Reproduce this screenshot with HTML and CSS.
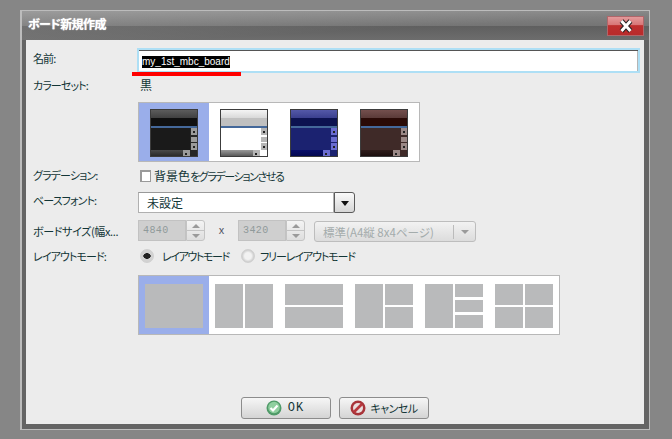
FILE: index.html
```html
<!DOCTYPE html>
<html lang="ja">
<head>
    <meta charset="UTF-8">
    <meta name="viewport" content="width=device-width, initial-scale=1.0">
    <title>ボード新規作成</title>
    <link rel="stylesheet" href="styles.css">
</head>
<body>
    <div class="dialog">
        <div class="titlebar">
            <span class="title">ボード新規作成</span>
            <button class="close" type="button">
                <svg width="16" height="14" viewBox="0 0 16 14">
                    <path d="M3.5 2 L12.5 12 M12.5 2 L3.5 12" stroke="#222" stroke-width="5" fill="none"/>
                    <path d="M3.5 2 L12.5 12 M12.5 2 L3.5 12" stroke="#fff" stroke-width="3" fill="none"/>
                </svg>
            </button>
        </div>
        <div class="content">
            <div class="row row-name">
                <label class="label">名前:</label>
                <div class="name-input"><span class="selected">my_1st_mbc_board</span></div>
                <div class="red-mark"></div>
            </div>
            <div class="row row-set">
                <label class="label">カラーセット:</label>
                <span class="value">黒</span>
            </div>
            <div class="row row-swatch">
                <div class="picker">
                    <div class="cell cell-color active">
                        <div class="thumb black">
                            <div class="t-head"></div><div class="t-band"></div><div class="t-line"></div>
                            <div class="t-mid"><div class="t-main"></div><div class="t-scroll"><i class="up"></i><i class="grip"></i><i class="dn"></i></div></div>
                            <div class="t-foot"><div class="t-bar"><i></i></div></div>
                        </div>
                    </div>
                    <div class="cell cell-color">
                        <div class="thumb white">
                            <div class="t-head"></div><div class="t-band"></div><div class="t-line"></div>
                            <div class="t-mid"><div class="t-main"></div><div class="t-scroll"><i class="up"></i><i class="grip"></i><i class="dn"></i></div></div>
                            <div class="t-foot"><div class="t-bar"><i></i></div></div>
                        </div>
                    </div>
                    <div class="cell cell-color">
                        <div class="thumb navy">
                            <div class="t-head"></div><div class="t-band"></div><div class="t-line"></div>
                            <div class="t-mid"><div class="t-main"></div><div class="t-scroll"><i class="up"></i><i class="grip"></i><i class="dn"></i></div></div>
                            <div class="t-foot"><div class="t-bar"><i></i></div></div>
                        </div>
                    </div>
                    <div class="cell cell-color">
                        <div class="thumb brown">
                            <div class="t-head"></div><div class="t-band"></div><div class="t-line"></div>
                            <div class="t-mid"><div class="t-main"></div><div class="t-scroll"><i class="up"></i><i class="grip"></i><i class="dn"></i></div></div>
                            <div class="t-foot"><div class="t-bar"><i></i></div></div>
                        </div>
                    </div>
                </div>
            </div>
            <div class="row row-check">
                <label class="label">グラデーション:</label>
                <div class="check-wrap"><span class="checkbox"></span><span class="check-text">背景色<span class="narrow">をグラデーションさせる</span></span></div>
            </div>
            <div class="row row-font">
                <label class="label">ベースフォント:</label>
                <div class="combo">
                    <div class="combo-text">未設定</div>
                    <div class="combo-btn"><i class="arrow"></i></div>
                </div>
            </div>
            <div class="row row-size">
                <label class="label">ボードサイズ(幅x...</label>
                <div class="size-wrap">
                    <div class="num">4840</div>
                    <div class="spin"><span><i class="s-up"></i></span><span><i class="s-dn"></i></span></div>
                    <span class="times">x</span>
                    <div class="num">3420</div>
                    <div class="spin"><span><i class="s-up"></i></span><span><i class="s-dn"></i></span></div>
                    <div class="paper">
                        <span class="paper-text">標準(A4縦 8x4ページ)</span>
                        <span class="paper-btn"><i class="s-dn"></i></span>
                    </div>
                </div>
            </div>
            <div class="row row-mode">
                <label class="label">レイアウトモード:</label>
                <div class="radio-wrap">
                    <span class="radio on"></span><span class="radio-text">レイアウトモード</span>
                    <span class="radio"></span><span class="radio-text">フリーレイアウトモード</span>
                </div>
            </div>
            <div class="row row-layout">
                <div class="picker">
                    <div class="cell cell-layout active"><div class="pane"></div></div>
                    <div class="cell cell-layout"><div class="split cols"><div class="pane"></div><div class="pane"></div></div></div>
                    <div class="cell cell-layout"><div class="split rows"><div class="pane"></div><div class="pane"></div></div></div>
                    <div class="cell cell-layout"><div class="split cols"><div class="pane"></div><div class="split rows"><div class="pane"></div><div class="pane"></div></div></div></div>
                    <div class="cell cell-layout"><div class="split cols"><div class="pane"></div><div class="split rows three"><div class="pane"></div><div class="pane"></div><div class="pane"></div></div></div></div>
                    <div class="cell cell-layout"><div class="split cols"><div class="split rows"><div class="pane"></div><div class="pane"></div></div><div class="split rows"><div class="pane"></div><div class="pane"></div></div></div></div>
                </div>
            </div>
            <div class="footer">
                <button class="btn btn-first" type="button">
                    <svg width="16" height="16" viewBox="0 0 16 16">
                        <circle cx="8" cy="8" r="7.5" fill="#4f9a68"/>
                        <circle cx="8" cy="7.5" r="5.8" fill="#8fcf9f"/>
                        <path d="M4.5 8 L7 10.5 L11.5 5.5" stroke="#fff" stroke-width="2.2" fill="none"/>
                    </svg>
                    <span class="btn-ok">OK</span>
                </button>
                <button class="btn" type="button">
                    <svg width="16" height="16" viewBox="0 0 16 16">
                        <circle cx="8" cy="8" r="7.5" fill="#a8343a"/>
                        <circle cx="8" cy="8" r="5" fill="#e9dede"/>
                        <path d="M4 12 L12 4" stroke="#b8383e" stroke-width="2.6" fill="none"/>
                    </svg>
                    <span class="btn-text">キャンセル</span>
                </button>
            </div>
        </div>
    </div>
</body>
</html>
```

FILE: styles.css
```css
html, body {
    height: 100%;
}
body {
    margin: 0;
    background-color: #868686;
    font-family: "Noto Sans CJK JP", "Liberation Sans", sans-serif;
    font-size: 12px;
    font-feature-settings: "palt";
    color: #123536;
    overflow: hidden;
}
.dialog {
    box-sizing: border-box;
    width: 630px;
    height: 420px;
    margin: 10px 0 0 20px;
    border: 1px solid #bcbcbc;
    border-left-width: 2px;
    background-color: #646464;
    padding: 0 5px 5px 4px;
    display: flex;
    flex-direction: column;
}
.titlebar {
    height: 29px;
    margin: 0 -5px 0 -4px;
    padding: 0 5px 0 6px;
    display: flex;
    align-items: flex-start;
    justify-content: space-between;
    background:
        linear-gradient(177deg, rgba(255, 255, 255, 0.18) 0%, rgba(255, 255, 255, 0.08) 35%, rgba(255, 255, 255, 0) 60%),
        linear-gradient(to bottom, #868686 0%, #757575 50%, #5f5f5f 52%, #6d6d6d 100%);
}
.title {
    margin-top: 3px;
    color: #fff;
    font-weight: bold;
    font-size: 12px;
    letter-spacing: -0.6px;
    line-height: 20px;
    text-shadow: 0 0 1px #eee;
}
.close {
    width: 37px;
    height: 20px;
    margin-top: 5px;
    padding: 0;
    border: 1px solid #b0666a;
    background: linear-gradient(to bottom, #e39a9b 0%, #d97778 42%, #be2f2e 48%, #b92b2b 100%);
    display: flex;
    align-items: center;
    justify-content: center;
}
.content {
    flex: 1;
    background-color: #ececec;
    display: flex;
    flex-direction: column;
}
.row {
    display: grid;
    grid-template-columns: 105px 1fr;
    padding-left: 7px;
    position: relative;
    align-items: center;
}
.label {
    line-height: 16px;
    font-size: 11px;
    letter-spacing: -0.9px;
    white-space: nowrap;
    grid-column: 1;
}
.row-swatch, .row-layout {
    display: block;
    padding-left: 112px;
}

/* name */
.row-name {
    margin-top: 8px;
    height: 25px;
    margin-right: 4px;
}
.row-name .label {
    margin-top: -5px;
}
.name-input {
    box-sizing: border-box;
    height: 25px;
    margin-left: -1px;
    padding: 2px 0 0 3px;
    border: 2px solid #aedff5;
    background-color: #fff;
    box-shadow: inset 0 1px 0 #555, inset -1px 0 0 #b5b5b5;
    display: flex;
    align-items: center;
}
.selected {
    background-color: #000;
    color: #fff;
    font-family: "Liberation Sans", sans-serif;
    font-size: 10px;
    line-height: 12px;
}
.red-mark {
    position: absolute;
    left: 106px;
    top: 24px;
    width: 109px;
    height: 4px;
    background-color: #f00;
}

/* color set */
.row-set {
    margin-top: 4px;
    height: 16px;
}
.value {
    margin-left: 2px;
    font-size: 12px;
    line-height: 16px;
}
.row-swatch {
    margin-top: 9px;
}
.picker {
    display: inline-flex;
    vertical-align: top;
    border: 1px solid #b8b8b8;
    background-color: #fff;
}
.cell {
    box-sizing: border-box;
    width: 70px;
}
.cell.active {
    background-color: #9aaeea;
}
.cell-color {
    height: 58px;
    padding: 6px 11px 4px;
}
.thumb {
    box-sizing: border-box;
    width: 48px;
    height: 48px;
    border: 1px solid #3c3c3c;
    display: flex;
    flex-direction: column;
    background-color: var(--base);
}
.thumb.black {
    --base: #262626;
    --head1: #5c5c5c;
    --head2: #404040;
    --band: #101010;
    --main: #1a1a1a;
    --foot1: #4a4a4a;
    --foot2: #2a2a2a;
    --btn: #9b9b9b;
}
.thumb.white {
    --base: #fff;
    --head1: #f4f4f4;
    --head2: #d8d8d8;
    --band: #c0c0c0;
    --main: #fff;
    --foot1: #9a9a9a;
    --foot2: #5a5a5a;
    --btn: #b5b5b5;
}
.thumb.navy {
    --base: #1b2270;
    --head1: #5459a8;
    --head2: #3a3f8e;
    --band: #0c1250;
    --main: #1b2270;
    --foot1: #080e6a;
    --foot2: #030850;
    --btn: #6a6cd0;
}
.thumb.brown {
    --base: #3f2a28;
    --head1: #744f4d;
    --head2: #5a3a38;
    --band: #2a0a06;
    --main: #3f2a28;
    --foot1: #2f1d1b;
    --foot2: #1c0f0e;
    --btn: #9a8886;
}
.t-head {
    height: 8px;
    background: linear-gradient(to bottom, var(--head1), var(--head2));
}
.t-band {
    height: 8px;
    background-color: var(--band);
}
.t-line {
    height: 2px;
    background-color: #44689a;
}
.t-mid {
    height: 22px;
    display: flex;
}
.t-main {
    width: 39px;
    background-color: var(--main);
}
.t-scroll {
    width: 6px;
    margin-left: 1px;
    display: flex;
    flex-direction: column;
    justify-content: space-between;
    background-color: var(--base);
}
.t-scroll i {
    display: block;
    height: 7px;
    background-color: var(--btn);
    position: relative;
}
.t-scroll .grip {
    height: 5px;
    background: repeating-linear-gradient(to right, var(--btn) 0 1px, var(--base) 1px 1.5px, var(--btn) 1.5px 2px);
}
.t-scroll .up::after, .t-scroll .dn::after, .t-bar i::after {
    content: "";
    position: absolute;
    left: 2px;
    top: 3px;
    width: 2px;
    height: 2px;
    background-color: #222;
}
.t-foot {
    height: 6px;
}
.t-bar {
    height: 100%;
    width: 39px;
    background: linear-gradient(to bottom, var(--foot1), var(--foot2));
    display: flex;
    justify-content: flex-end;
}
.t-bar i {
    display: block;
    width: 7px;
    height: 6px;
    background-color: var(--btn);
    position: relative;
}

/* checkbox */
.row-check {
    margin-top: 6px;
    height: 12px;
}
.row-check .label {
    margin-top: -1px;
}
.check-wrap {
    display: flex;
    align-items: center;
    padding-left: 2px;
    gap: 3px;
    line-height: 12px;
}
.check-text {
    white-space: nowrap;
}
.narrow {
    font-size: 11px;
    letter-spacing: -1.4px;
}
.checkbox {
    box-sizing: border-box;
    width: 11px;
    height: 12px;
    border: 1px solid #9a9a9a;
    border-left-width: 2px;
    border-top-width: 2px;
    background-color: #fff;
}

/* font */
.row-font {
    margin-top: 12px;
    height: 21px;
}
.row-font .label {
    margin-top: -6px;
}
.combo {
    display: flex;
    height: 21px;
}
.combo-text {
    box-sizing: border-box;
    width: 196px;
    padding-left: 8px;
    border: 1px solid #b0b0b0;
    border-top-color: #999;
    background-color: #fff;
    line-height: 19px;
}
.combo-btn {
    box-sizing: border-box;
    width: 21px;
    border: 1px solid #5a5a5a;
    border-radius: 0 3px 3px 0;
    background: linear-gradient(to bottom, #fafafa, #d6d6d6);
    display: flex;
    align-items: center;
    justify-content: center;
}
.arrow {
    width: 0;
    height: 0;
    margin-top: 1px;
    border-left: 4px solid transparent;
    border-right: 4px solid transparent;
    border-top: 5px solid #111;
}

/* size */
.row-size {
    margin-top: 7px;
    height: 22px;
}
.row-size .label {
    letter-spacing: -0.35px;
}
.size-wrap {
    display: flex;
    height: 22px;
}
.num {
    box-sizing: border-box;
    width: 48px;
    height: 21px;
    padding-left: 4px;
    background-color: #cfcfcf;
    border: 1px solid #c2c2c2;
    color: #8f9a9a;
    font-family: "Liberation Mono", monospace;
    font-size: 10px;
    line-height: 20px;
    letter-spacing: 0.4px;
}
.spin {
    box-sizing: border-box;
    width: 19px;
    height: 21px;
    border: 1px solid #c4c4c4;
    border-radius: 0 3px 3px 0;
    display: flex;
    flex-direction: column;
    background: linear-gradient(to bottom, #f4f4f4, #dedede);
}
.spin span {
    flex: 1;
    display: flex;
    align-items: center;
    justify-content: center;
}
.spin span:first-child {
    border-bottom: 1px solid #c4c4c4;
}
.s-up, .s-dn {
    width: 0;
    height: 0;
    border-left: 4px solid transparent;
    border-right: 4px solid transparent;
}
.s-up {
    border-bottom: 4px solid #9a9a9a;
}
.s-dn {
    border-top: 4px solid #9a9a9a;
}
.times {
    width: 33px;
    text-align: center;
    color: #556;
    font-size: 11px;
    line-height: 19px;
}
.paper {
    box-sizing: border-box;
    width: 162px;
    height: 21px;
    margin: 1px 0 0 9px;
    border: 1px solid #bdbdbd;
    border-radius: 3px;
    background: linear-gradient(to bottom, #f2f2f2, #dcdcdc);
    display: flex;
    align-items: center;
    color: #a4acac;
    font-size: 11.5px;
}
.paper-text {
    width: 139px;
    padding-left: 8px;
    box-sizing: border-box;
    white-space: nowrap;
    border-right: 1px solid #bbb;
    line-height: 14px;
}
.paper-btn {
    flex: 1;
    display: flex;
    justify-content: center;
}

/* layout mode */
.row-mode {
    margin-top: 6px;
    height: 16px;
}
.radio-wrap {
    display: flex;
    align-items: center;
    padding-left: 2px;
}
.radio {
    box-sizing: border-box;
    width: 14px;
    height: 14px;
    border-radius: 50%;
    background: radial-gradient(circle, #f2f2f2 0 40%, #c8c8c8 75%, #e8e8e8 100%);
    border: 1px solid #d0d0d0;
}
.radio.on {
    background: radial-gradient(ellipse 4px 3px, #222 0 85%, #d2d2d2 100%);
}
.radio-text {
    width: 79px;
    margin-left: 8px;
    font-size: 11px;
    letter-spacing: -1.4px;
    white-space: nowrap;
}
.radio-text:last-child {
    width: auto;
    margin-left: 5px;
    letter-spacing: -1.1px;
}

/* layout picker */
.row-layout {
    margin-top: 11px;
}
.cell-layout {
    height: 58px;
    padding: 8px 6px 6px;
}
.cell-layout > .pane, .cell-layout > .split {
    height: 44px;
}
.pane {
    background-color: #b9babb;
    min-height: 0;
}
.split {
    display: grid;
    gap: 2px;
}
.split.cols {
    grid-template-columns: 1fr 1fr;
}
.split.rows {
    grid-template-rows: 1fr 1fr;
}
.split.three {
    grid-template-rows: 13px 12px 13px;
    gap: 3px;
}

/* buttons */
.footer {
    margin-top: auto;
    padding-bottom: 5px;
    display: flex;
    justify-content: center;
    gap: 8px;
}
.btn {
    box-sizing: border-box;
    width: 90px;
    height: 22px;
    padding: 0;
    border: 1px solid #8c8c8c;
    border-radius: 3px;
    background: linear-gradient(to bottom, #f6f6f6, #d4d4d4);
    color: #123536;
    font-family: inherit;
    font-size: 11px;
    font-feature-settings: "palt";
    display: flex;
    align-items: center;
    justify-content: center;
    gap: 4px;
}
.btn-first {
    gap: 6px;
    padding-right: 2px;
}
.btn-text {
    letter-spacing: -0.5px;
}
.btn-ok {
    font-family: "Liberation Mono", monospace;
    font-size: 12px;
    letter-spacing: 1px;
}
```
